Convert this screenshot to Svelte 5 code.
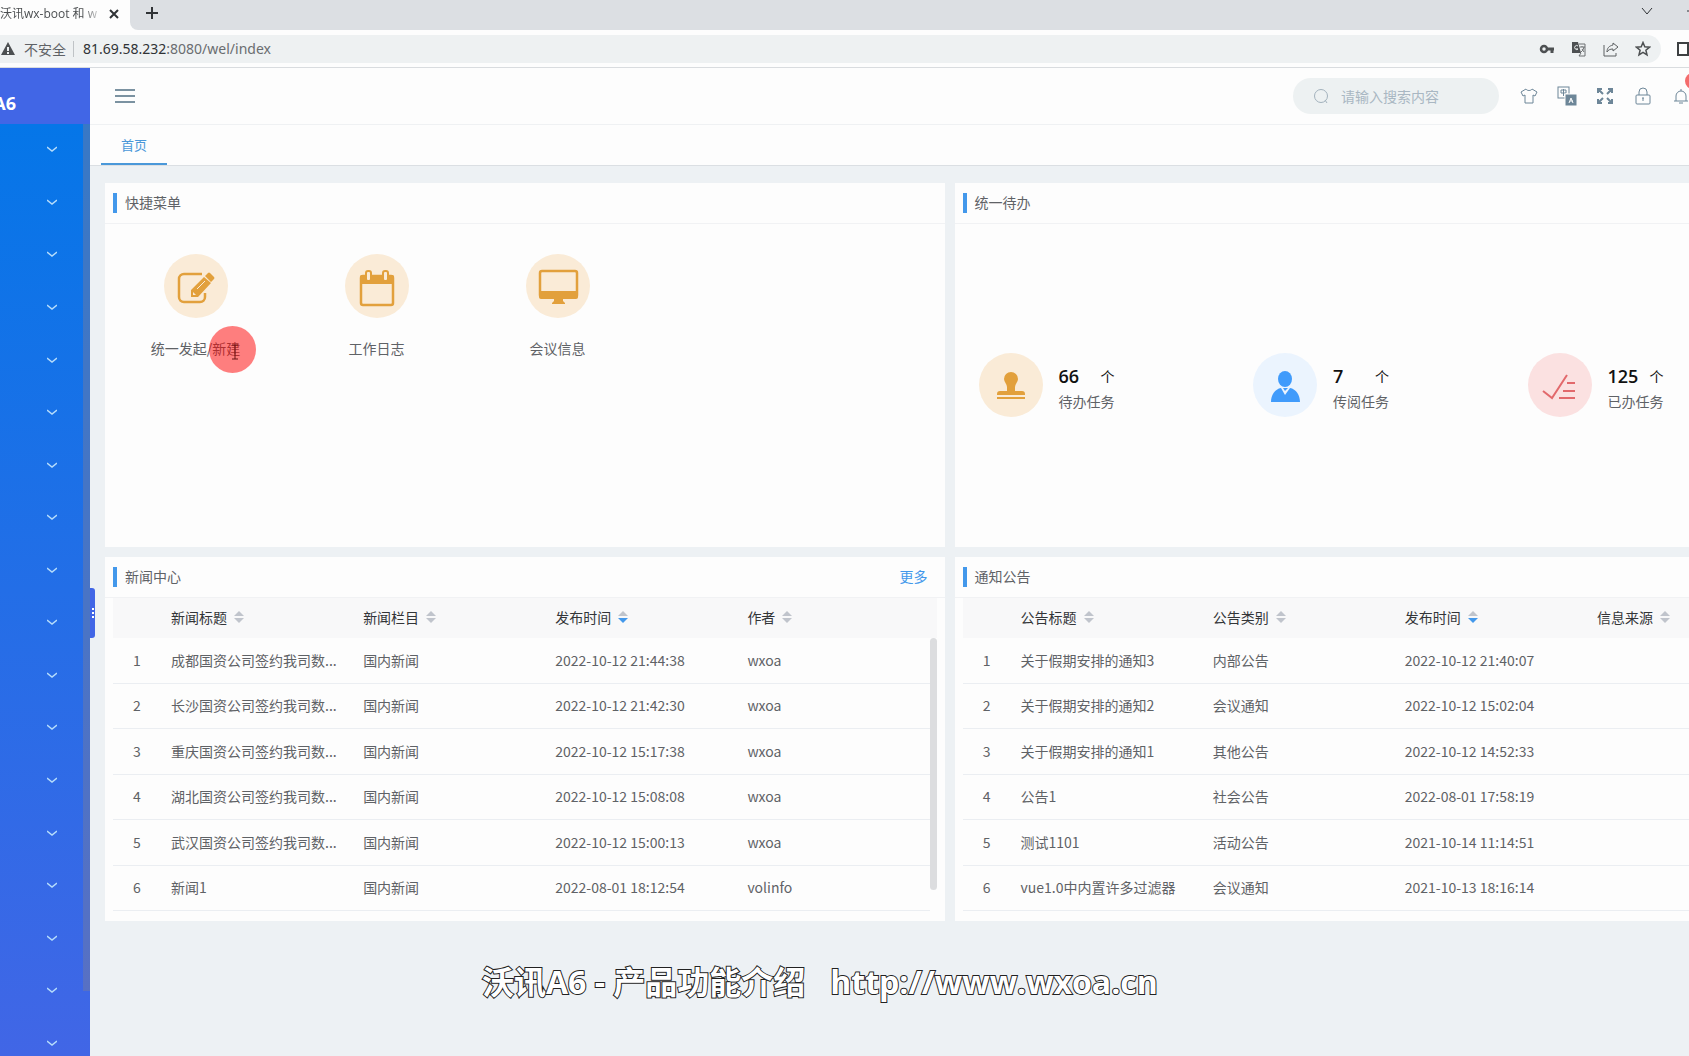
<script>
    const menuCount = 18;

    const shortcuts = [
        { icon: "edit", label: "统一发起/新建" },
        { icon: "calendar", label: "工作日志" },
        { icon: "monitor", label: "会议信息" },
    ];

    const todos = [
        { icon: "stamp", count: 66, label: "待办任务", tone: "orange" },
        { icon: "user", count: 7, label: "传阅任务", tone: "blue" },
        { icon: "check", count: 125, label: "已办任务", tone: "red" },
    ];

    const newsTable = {
        columns: ["新闻标题", "新闻栏目", "发布时间", "作者"],
        rows: [
            ["成都国资公司签约我司数...", "国内新闻", "2022-10-12 21:44:38", "wxoa"],
            ["长沙国资公司签约我司数...", "国内新闻", "2022-10-12 21:42:30", "wxoa"],
            ["重庆国资公司签约我司数...", "国内新闻", "2022-10-12 15:17:38", "wxoa"],
            ["湖北国资公司签约我司数...", "国内新闻", "2022-10-12 15:08:08", "wxoa"],
            ["武汉国资公司签约我司数...", "国内新闻", "2022-10-12 15:00:13", "wxoa"],
            ["新闻1", "国内新闻", "2022-08-01 18:12:54", "volinfo"],
        ],
    };

    const noticeTable = {
        columns: ["公告标题", "公告类别", "发布时间", "信息来源"],
        rows: [
            ["关于假期安排的通知3", "内部公告", "2022-10-12 21:40:07", ""],
            ["关于假期安排的通知2", "会议通知", "2022-10-12 15:02:04", ""],
            ["关于假期安排的通知1", "其他公告", "2022-10-12 14:52:33", ""],
            ["公告1", "社会公告", "2022-08-01 17:58:19", ""],
            ["测试1101", "活动公告", "2021-10-14 11:14:51", ""],
            ["vue1.0中内置许多过滤器", "会议通知", "2021-10-13 18:16:14", ""],
        ],
    };
</script>

{#snippet roundIcon(name)}
    <svg viewBox="0 0 64 64" width="64" height="64" aria-hidden="true">
        {#if name === "edit"}
            <path d="M38 20H20a5 5 0 0 0-5 5v18a5 5 0 0 0 5 5h16a5 5 0 0 0 5-5v-4" fill="none" stroke="currentColor" stroke-width="2.500" />
            <path d="M27 43v-7l13-13 7 6-13 14z M41 22l3-3q1-1 2 0l4 4q1 1 0 2l-3 3z" fill="currentColor" />
            <path d="M33 35l8-8" stroke="#faebd7" stroke-width="1" />
            <path d="M29 38l3 3h-3z" fill="#faebd7" />
        {:else if name === "calendar"}
            <rect x="16" y="22" width="32" height="29" rx="2" fill="none" stroke="currentColor" stroke-width="2.500" />
            <path d="M15 30v-7q0-2 2-2h30q2 0 2 2v7z" fill="currentColor" />
            <rect x="21" y="17" width="5" height="10" rx="2" fill="#faebd7" stroke="currentColor" stroke-width="2" />
            <rect x="38" y="17" width="5" height="10" rx="2" fill="#faebd7" stroke="currentColor" stroke-width="2" />
        {:else if name === "monitor"}
            <rect x="14" y="17" width="37" height="26" rx="2" fill="none" stroke="currentColor" stroke-width="2.500" />
            <path d="M13 37h39v6q0 2-2 2H15q-2 0-2-2z M28 44h9v3l2 2v1H26v-1l2-2z" fill="currentColor" />
        {:else if name === "stamp"}
            <path d="M32 19a7 7 0 0 1 7 7c0 3-3 5-3 8v4h7a3 3 0 0 1 3 3v1H18v-1a3 3 0 0 1 3-3h7v-4c0-3-3-5-3-8a7 7 0 0 1 7-7z" fill="currentColor" />
            <path d="M18 45h28" stroke="currentColor" stroke-width="2" />
        {:else if name === "user"}
            <ellipse cx="32" cy="26" rx="7" ry="8" fill="currentColor" />
            <path d="M18 49c0-7 4-13 10-14l4 7 5-7c6 1 10 7 10 14z M30 35h5l-3 3z" fill="currentColor" />
        {:else if name === "check"}
            <path d="M15 38l9 7 15-23" fill="none" stroke="currentColor" stroke-width="2" />
            <path d="M39 30h8M35 38h12M31 45h16" stroke="currentColor" stroke-width="2" />
        {/if}
    </svg>
{/snippet}

{#snippet dataTable(table, hasScroll)}
    <div class="table-wrap">
        <table>
            <colgroup>
                <col class="index-col" />
                {#each table.columns as column}
                    <col />
                {/each}
                <col class="gutter-col" />
            </colgroup>
            <thead>
                <tr>
                    <th></th>
                    {#each table.columns as column}
                        <th>
                            <button class="sort" type="button">
                                {column}
                                <svg
                                    class="caret"
                                    class:descending={column === "发布时间"}
                                    viewBox="0 0 10 12"
                                    width="10"
                                    height="12"
                                    aria-hidden="true"
                                >
                                    <path d="M0 5l5-5 5 5z" />
                                    <path class="down" d="M0 7h10l-5 5z" />
                                </svg>
                            </button>
                        </th>
                    {/each}
                    <th></th>
                </tr>
            </thead>
            <tbody>
                {#each table.rows as row, i}
                    <tr>
                        <td class="index">{i + 1}</td>
                        {#each row as cell}
                            <td>{cell}</td>
                        {/each}
                        <td class="gutter"></td>
                    </tr>
                {/each}
            </tbody>
        </table>
        {#if hasScroll}
            <span class="table-scroll"></span>
        {/if}
    </div>
{/snippet}

<div class="page">
    <div class="tab-strip">
        <div class="browser-tab">
            <span class="browser-title">沃讯wx-boot 和 w</span>
            <button type="button" aria-label="关闭标签页">
                <svg viewBox="0 0 10 10" width="10" height="10"><path d="M1 1l8 8M9 1l-8 8" /></svg>
            </button>
        </div>
        <button class="new-tab" type="button" aria-label="新标签页">
            <svg viewBox="0 0 12 12" width="12" height="12"><path d="M6 0v12M0 6h12" /></svg>
        </button>
        <button class="tab-search" type="button" aria-label="搜索标签页">
            <svg viewBox="0 0 12 12" width="12" height="12"><path d="M1 3l5 6 5-6" /></svg>
        </button>
        <button class="minimize" type="button" aria-label="最小化">
            <svg viewBox="0 0 12 12" width="12" height="12"><path d="M0 6h12" /></svg>
        </button>
    </div>

    <div class="address-row">
        <div class="omnibox">
            <svg viewBox="0 0 14 14" width="14" height="14" aria-hidden="true">
                <path d="M7 0l7 13H0z" fill="#4d5052" />
                <path d="M7 5v4M7 10v2" stroke="#eef1f2" stroke-width="2" />
            </svg>
            <span class="insecure">不安全</span>
            <span class="url"><b>81.69.58.232</b>:8080/wel/index</span>
            <div class="omnibox-icons">
                <button type="button" aria-label="密码">
                    <svg viewBox="0 0 16 16" width="16" height="16">
                        <circle cx="5" cy="8" r="3" fill="none" stroke="#4d5052" stroke-width="2.500" />
                        <path d="M8 8h7M13 8v4" stroke="#4d5052" stroke-width="3" />
                    </svg>
                </button>
                <button type="button" aria-label="翻译">
                    <svg viewBox="0 0 16 16" width="16" height="16">
                        <path d="M1 1h6l3 11H1z" fill="#4d5052" />
                        <path d="M8 3h6v12H8l2-3" fill="none" stroke="#6d7072" />
                        <path d="M7 5a2 2 0 1 0 0 3H5" fill="none" stroke="#eef1f2" />
                        <path d="M9 6h5M11 5v1M13 6q-1 4-3 5M11 8l2 3" fill="none" stroke="#6d7072" />
                    </svg>
                </button>
                <button type="button" aria-label="分享">
                    <svg viewBox="0 0 16 16" width="16" height="16" fill="none" stroke="#5d6062">
                        <path d="M1 4v11h12v-3" />
                        <path d="M10 2l5 4-5 4V8C7 8 5 9 4 11c0-4 2-6 6-7z" />
                    </svg>
                </button>
                <button type="button" aria-label="收藏">
                    <svg viewBox="0 0 16 16" width="16" height="16" fill="none" stroke="#4d5052" stroke-width="1.500">
                        <path d="M8 1.500l1.800 4.300 4.700.4-3.600 3 1.100 4.600L8 11.300l-4 2.500 1.100-4.600-3.600-3 4.700-.4z" />
                    </svg>
                </button>
            </div>
        </div>
        <button class="side-panel" type="button" aria-label="侧边栏">
            <svg viewBox="0 0 16 14" width="16" height="14">
                <path d="M1 1h14v12H1z" fill="none" stroke="#3d4042" stroke-width="2" />
                <path d="M10 0h6v14h-6z" fill="#3d4042" />
            </svg>
        </button>
    </div>

    <div class="app">
        <aside class="sidebar">
            <div class="logo"><span>A6</span></div>
            <nav>
                <ul>
                    {#each Array(menuCount) as _, i}
                        <li>
                            <button type="button" aria-label="展开菜单 {i + 1}">
                                <svg viewBox="0 0 10 6" width="10" height="6"><path d="M0 1l5 4 5-4" /></svg>
                            </button>
                        </li>
                    {/each}
                </ul>
                <span class="side-scroll"></span>
            </nav>
            <span class="drag-handle"><i></i><i></i><i></i></span>
        </aside>

        <div class="main">
            <header class="topbar">
                <button class="menu-toggle" type="button" aria-label="折叠菜单">
                    <svg viewBox="0 0 20 14" width="20" height="14"><path d="M0 1h20M0 7h20M0 13h20" /></svg>
                </button>
                <label class="search">
                    <svg viewBox="0 0 16 16" width="16" height="16" aria-hidden="true">
                        <circle cx="8" cy="8" r="6.500" />
                        <path d="M12 12l2 3" />
                    </svg>
                    <input type="text" placeholder="请输入搜索内容" aria-label="搜索" />
                </label>
                <div class="tools">
                    <button type="button" aria-label="主题">
                        <svg viewBox="0 0 18 18" width="18" height="18">
                            <path d="M6 2L1 5l2 4 2-1v8h8V8l2 1 2-4-5-3c-1 2-5 2-6 0z" />
                        </svg>
                    </button>
                    <button type="button" aria-label="语言">
                        <svg viewBox="0 0 20 20" width="20" height="20">
                            <rect x="1" y="1" width="11" height="11" />
                            <path d="M4 4h5v3H4zM6.500 3v7" />
                            <rect x="8" y="8" width="12" height="12" fill="#6d8698" stroke="#fdfdfd" />
                            <path d="M12 17l2-5 2 5M13 15h3" stroke="#fdfdfd" />
                        </svg>
                    </button>
                    <button type="button" aria-label="全屏">
                        <svg viewBox="0 0 18 18" width="18" height="18" stroke-width="2">
                            <path d="M2 6V2h4M2 2l5 5M12 2h4v4M16 2l-5 5M2 12v4h4M2 16l5-5M16 12v4h-4M16 16l-5-5" />
                        </svg>
                    </button>
                    <button type="button" aria-label="锁屏">
                        <svg viewBox="0 0 18 18" width="18" height="18">
                            <rect x="2" y="8" width="14" height="9" rx="1" />
                            <path d="M5 8V5a4 4 0 0 1 8 0v3M8 11h2M9 11v3" />
                        </svg>
                    </button>
                    <button class="bell" type="button" aria-label="消息">
                        <svg viewBox="0 0 18 18" width="18" height="18">
                            <path d="M2 14h14M4 14V9a5 5 0 0 1 10 0v5M9 2v2M7 16h4" />
                        </svg>
                        <span class="badge"></span>
                    </button>
                </div>
            </header>

            <nav class="page-tabs">
                <a href="#home">首页</a>
            </nav>

            <main class="cards">
                <section class="card">
                    <div class="card-head"><h2>快捷菜单</h2></div>
                    <div class="shortcuts">
                        {#each shortcuts as item}
                            <a class="shortcut" href="#{item.icon}">
                                <span class="disc orange">{@render roundIcon(item.icon)}</span>
                                <span>{item.label}</span>
                            </a>
                        {/each}
                    </div>
                </section>

                <section class="card">
                    <div class="card-head"><h2>统一待办</h2></div>
                    <div class="todos">
                        {#each todos as todo}
                            <div class="todo">
                                <span class="disc {todo.tone}">{@render roundIcon(todo.icon)}</span>
                                <div class="todo-text">
                                    <div class="todo-count"><strong>{todo.count}</strong><span>个</span></div>
                                    <div>{todo.label}</div>
                                </div>
                            </div>
                        {/each}
                    </div>
                </section>

                <section class="card">
                    <div class="card-head">
                        <h2>新闻中心</h2>
                        <a class="more" href="#news">更多</a>
                    </div>
                    {@render dataTable(newsTable, true)}
                </section>

                <section class="card">
                    <div class="card-head"><h2>通知公告</h2></div>
                    {@render dataTable(noticeTable, false)}
                </section>
            </main>
        </div>
    </div>

    <div class="pointer">
        <svg viewBox="0 0 8 16" width="8" height="16" aria-hidden="true">
            <path d="M1 1h6M4 1v14M1 15h6" />
        </svg>
    </div>
    <div class="caption">沃讯A6 - 产品功能介绍 &nbsp; http://www.wxoa.cn</div>
</div>

<style>
    :global(body) {
        margin: 0;
    }

    .page {
        position: relative;
        display: flex;
        flex-direction: column;
        height: 100vh;
        overflow: hidden;
        background: #edf1f4;
        color: #5f6266;
        font-family: "Noto Sans CJK SC", sans-serif;
        font-size: 14px;
        line-height: 20px;
    }

    button {
        display: flex;
        align-items: center;
        justify-content: center;
        padding: 0;
        border: 0;
        background: none;
        color: inherit;
        font: inherit;
    }

    a {
        color: inherit;
        text-decoration: none;
    }

    /* browser */
    .tab-strip {
        display: flex;
        flex: none;
        height: 30px;
        background: #fdfdfd;
    }

    .tab-strip svg {
        fill: none;
        stroke: #303336;
        stroke-width: 2;
    }

    .browser-tab {
        display: flex;
        flex: none;
        align-items: center;
        width: 130px;
        height: 27px;
    }

    .browser-title {
        width: 109px;
        overflow: hidden;
        color: #4b4e50;
        font-family: "Open Sans", "Noto Sans CJK SC", sans-serif;
        font-size: 12px;
        white-space: nowrap;
        mask-image: linear-gradient(90deg, #000 82px, transparent 104px);
    }

    .new-tab {
        flex: 1;
        justify-content: flex-start;
        padding: 0 0 4px 16px;
        border-radius: 0 0 0 8px;
        background: #dcdfe3;
    }

    .tab-search {
        padding: 0 34px 8px 0;
        background: #dcdfe3;
    }

    .tab-search svg {
        stroke-width: 1;
    }

    .minimize {
        width: 2px;
        padding-bottom: 8px;
        justify-content: flex-start;
        overflow: hidden;
        background: #dcdfe3;
    }

    .minimize svg {
        flex: none;
        stroke-width: 1;
    }

    .address-row {
        display: flex;
        flex: none;
        align-items: center;
        gap: 16px;
        height: 37px;
        overflow: hidden;
        border-bottom: 1px solid #d9dcdf;
        background: #fdfdfd;
    }

    .omnibox {
        display: flex;
        flex: 1;
        align-items: center;
        height: 28px;
        padding-left: 1px;
        border-radius: 0 14px 14px 0;
        background: #eef1f2;
    }

    .insecure {
        margin: 0 9px;
        padding-right: 7px;
        border-right: 1px solid #bfc3c6;
        line-height: 16px;
    }

    .url {
        color: #6a6d70;
        font-family: "Noto Sans", "Noto Sans CJK SC", sans-serif;
    }

    .url b {
        color: #303336;
        font-weight: 400;
    }

    .omnibox-icons {
        display: flex;
        gap: 16px;
        margin-left: auto;
        padding-right: 10px;
    }

    .side-panel {
        width: 12px;
        justify-content: flex-start;
    }

    .side-panel svg {
        flex: none;
    }

    /* layout */
    .app {
        display: flex;
        flex: 1;
        min-height: 0;
    }

    .sidebar {
        position: relative;
        display: flex;
        flex: none;
        flex-direction: column;
        width: 90px;
        background: #4166e6;
    }

    .logo {
        display: flex;
        flex: none;
        align-items: center;
        justify-content: flex-end;
        height: 56px;
        padding: 14px 74px 0 0;
        box-sizing: border-box;
        overflow: hidden;
        color: #fff;
        font-family: "Open Sans", sans-serif;
        font-size: 18px;
        font-weight: 700;
    }

    .sidebar nav {
        position: relative;
        flex: 1;
        overflow: hidden;
        background: linear-gradient(#0576e8, #4166e6);
    }

    .sidebar ul {
        display: flex;
        flex-direction: column;
        height: 946px;
        margin: 0;
        padding: 0;
        list-style: none;
    }

    .sidebar li {
        display: flex;
        flex: 1;
        justify-content: flex-end;
        padding: 0 33px 2px 0;
    }

    .sidebar li svg {
        fill: none;
        stroke: #b5dcfb;
        stroke-width: 1.5;
    }

    .side-scroll {
        position: absolute;
        top: 0;
        right: 0;
        width: 7px;
        height: 93%;
        background: rgba(120, 125, 155, 0.45);
    }

    .drag-handle {
        position: absolute;
        top: 520px;
        right: -5px;
        display: flex;
        flex-direction: column;
        align-items: center;
        justify-content: center;
        gap: 2px;
        width: 5px;
        height: 50px;
        border-radius: 0 3px 3px 0;
        background: #4166e6;
    }

    .drag-handle i {
        width: 2px;
        height: 2px;
        background: #fff;
    }

    .main {
        display: flex;
        flex: 1;
        flex-direction: column;
        min-width: 0;
    }

    .topbar {
        display: flex;
        flex: none;
        align-items: center;
        height: 56px;
        padding-left: 25px;
        border-bottom: 1px solid #eff1f3;
        background: #fdfdfd;
    }

    .menu-toggle svg {
        stroke: #7b92a1;
        stroke-width: 2;
    }

    .search {
        display: flex;
        align-items: center;
        gap: 12px;
        width: 206px;
        height: 36px;
        margin: 0 11px 0 auto;
        padding: 0 20px;
        box-sizing: border-box;
        border-radius: 18px;
        background: #edf1f2;
    }

    .search svg {
        flex: none;
        fill: none;
        stroke: #a3b2bd;
    }

    .search input {
        width: 100%;
        min-width: 0;
        padding: 0;
        border: 0;
        outline: 0;
        background: none;
        color: #5f6266;
        font: inherit;
    }

    .search input::placeholder {
        color: #a9b7c2;
        opacity: 1;
    }

    /* the last tool runs past the window edge */
    .tools {
        display: flex;
        margin-right: -11px;
    }

    .tools button {
        width: 38px;
        height: 36px;
    }

    .tools svg {
        fill: none;
        stroke: #6d8698;
    }

    .bell {
        position: relative;
    }

    .badge {
        position: absolute;
        top: -5px;
        right: -1px;
        width: 16px;
        height: 16px;
        border-radius: 8px;
        background: #f46c6c;
    }

    .page-tabs {
        display: flex;
        flex: none;
        height: 40px;
        padding-left: 11px;
        border-bottom: 1px solid #dbdfe3;
        background: #fdfdfd;
    }

    .page-tabs a {
        padding: 0 20px;
        border-bottom: 2px solid #4a98d9;
        color: #4a98d9;
        font-size: 13px;
        line-height: 40px;
    }

    .cards {
        display: grid;
        grid-template-columns: 53% 53%;
        gap: 10px;
        padding: 17px 0 0 15px;
    }

    .card {
        height: 364px;
        background: #fdfdfd;
    }

    .card-head {
        display: flex;
        align-items: center;
        justify-content: space-between;
        height: 40px;
        padding: 0 17px 0 8px;
        border-bottom: 1px solid #f1f2f4;
        line-height: 18px;
    }

    .card-head h2 {
        margin: 0;
        padding: 0 0 2px 8px;
        border-left: 4px solid #4398eb;
        font-size: 14px;
        font-weight: 400;
    }

    .more {
        padding-bottom: 2px;
        color: #4398eb;
    }

    .disc {
        display: block;
        flex: none;
        width: 64px;
        height: 64px;
        border-radius: 50%;
    }

    .disc.orange {
        background: #faebd7;
        color: #e2a03c;
    }

    .disc.blue {
        background: #ebf4fe;
        color: #409bfb;
    }

    .disc.red {
        background: #fbe1e1;
        color: #e2696c;
    }

    .shortcuts {
        display: flex;
        padding-top: 30px;
    }

    .shortcut {
        display: flex;
        flex-direction: column;
        align-items: center;
        gap: 20px;
        width: 181px;
    }

    .todos {
        display: grid;
        grid-template-columns: repeat(3, 1fr);
        align-items: center;
        height: 322px;
        padding: 0 8px;
    }

    .todo {
        display: flex;
        align-items: center;
        gap: 16px;
        padding-left: 16px;
    }

    .todo-text {
        width: 56px;
        padding-top: 4px;
    }

    .todo-count {
        display: flex;
        align-items: center;
        justify-content: space-between;
        height: 26px;
        margin-bottom: 2px;
        color: #111;
    }

    .todo-count strong {
        font-family: "Open Sans", sans-serif;
        font-size: 18px;
        font-weight: 600;
    }

    /* tables */
    .table-wrap {
        position: relative;
        margin: 0 8px;
    }

    table {
        width: 100%;
        height: 313px;
        border-spacing: 0;
        table-layout: fixed;
    }

    .index-col {
        width: 48px;
    }

    .gutter-col {
        width: 7px;
    }

    thead tr {
        height: 40px;
    }

    th {
        padding: 0 10px 2px;
        background: #f8f8f9;
        color: #333538;
        font-weight: 400;
    }

    th:last-child,
    td.gutter {
        padding: 0;
    }

    .sort {
        gap: 7px;
    }

    .caret {
        fill: #c0c4cc;
    }

    .caret.descending .down {
        fill: #4398eb;
    }

    td {
        padding: 0 10px 1px;
        border-bottom: 1px solid #ebeef2;
        white-space: nowrap;
    }

    td.index {
        padding: 0 0 1px;
        text-align: center;
    }

    td.gutter {
        border-bottom: 0;
    }

    .table-scroll {
        position: absolute;
        top: 40px;
        right: 0;
        width: 7px;
        height: 252px;
        border-radius: 4px;
        background: #dcdddf;
    }

    /* recording overlay */
    .pointer {
        position: absolute;
        top: 326px;
        left: 209px;
        display: flex;
        align-items: center;
        justify-content: center;
        width: 47px;
        height: 47px;
        border-radius: 50%;
        background: rgba(255, 0, 0, 0.5);
    }

    .pointer svg {
        margin: 4px 0 0 4px;
        fill: none;
        stroke: #6b1515;
    }

    .caption {
        position: absolute;
        bottom: 50px;
        left: 482px;
        color: #fff;
        font-family: "Open Sans", "Noto Sans CJK SC", sans-serif;
        font-size: 32px;
        font-weight: 700;
        line-height: 48px;
        white-space: nowrap;
        -webkit-text-stroke: 2px #222;
        paint-order: stroke fill;
    }
</style>
